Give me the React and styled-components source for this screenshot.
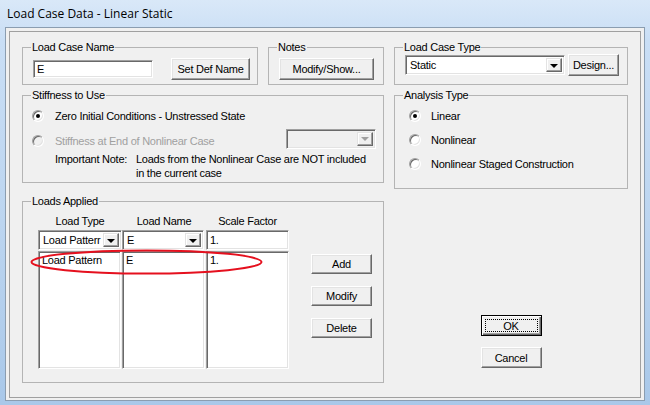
import styled, { createGlobalStyle } from 'styled-components';

const GlobalStyle = createGlobalStyle`
  html, body { margin: 0; padding: 0; }
  body {
    width: 650px;
    height: 405px;
    overflow: hidden;
    font-family: "Liberation Sans", Arial, sans-serif;
    font-size: 11px;
    letter-spacing: -0.25px;
    color: #000;
  }
`;

const Frame = styled.div`
  width: 650px;
  height: 405px;
  box-sizing: border-box;
  padding: 0 5px 4px 5px;
  display: flex;
  flex-direction: column;
  background: linear-gradient(180deg, #d9e8f8 0%, #c9def5 10%, #bcd5f0 55%, #a9c8e9 100%);
`;

const TitleBar = styled.div`
  height: 27px;
  display: flex;
  align-items: center;
  padding-left: 2px;
  font-family: "Open Sans", "Noto Sans", sans-serif;
  font-size: 12px;
  letter-spacing: 0;
  color: #000;
`;

const Client = styled.div`
  flex: 1;
  border: 1px solid #8b9db0;
  background: #f0f0f0;
  padding: 3px 3px 2px 3px;
  display: flex;
`;

const Panel = styled.div`
  flex: 1;
  border: 1px solid #a0a0a0;
  padding: 9px 11px 0 12px;
  display: flex;
  gap: 10px;
`;

const Column = styled.div`
  width: ${p => p.$w}px;
  display: flex;
  flex-direction: column;
  gap: ${p => p.$gap || 0}px;
`;

const Row = styled.div`
  display: flex;
  gap: ${p => p.$gap || 0}px;
  align-items: ${p => p.$align || 'stretch'};
  justify-content: ${p => p.$justify || 'flex-start'};
  width: ${p => p.$full ? '100%' : 'auto'};
  margin-top: ${p => p.$mt || 0}px;
`;

// group box: legend sits 8px in from the border whatever the content padding
const Group = styled.fieldset`
  margin: ${p => p.$mt || 0}px 0 0 0;
  min-width: 0;
  box-sizing: border-box;
  width: ${p => p.$w ? `${p.$w}px` : 'auto'};
  height: ${p => p.$h}px;
  border: 1px solid #b4b4b4;
  padding: ${p => p.$pt || 0}px 7px 0 ${p => p.$pl}px;
  display: flex;
  flex-direction: ${p => p.$dir || 'row'};
  align-items: ${p => p.$align || 'flex-start'};
  justify-content: ${p => p.$justify || 'flex-start'};
  gap: ${p => p.$gap || 0}px;
  & > legend {
    margin-left: ${p => 8 - p.$pl}px;
  }
`;

const Legend = styled.legend`
  padding: 0 1px;
  line-height: 13px;
  font-size: 11px;
`;

const Button = styled.button`
  box-sizing: border-box;
  width: ${p => p.$w}px;
  height: ${p => p.$h || 21}px;
  padding: 0;
  font-family: inherit;
  font-size: 11px;
  letter-spacing: -0.25px;
  color: #000;
  background: #f0f0f0;
  border: 1px solid;
  border-color: #fff #696969 #696969 #fff;
  box-shadow: inset -1px -1px #a0a0a0, inset 1px 1px #e3e3e3;
  flex-shrink: 0;
`;

const DefaultButton = styled(Button)`
  border: 1px solid #000;
  box-shadow: inset 1px 1px #fff, inset -1px -1px #696969, inset -2px -2px #a0a0a0;
  padding: 3px;
  span {
    display: block;
    height: 100%;
    border: 1px dotted #000;
    box-sizing: border-box;
    line-height: 12px;
  }
`;

const Sunken = styled.div`
  box-sizing: border-box;
  background: ${p => p.$disabled ? '#f0f0f0' : '#fff'};
  border: 1px solid;
  border-color: #a0a0a0 #fff #fff #a0a0a0;
  box-shadow: inset 1px 1px #696969, inset -1px -1px #e3e3e3;
`;

const TextBox = styled(Sunken)`
  width: ${p => p.$w}px;
  height: ${p => p.$h || 19}px;
  padding: 0 3px;
  display: flex;
  align-items: center;
  white-space: nowrap;
  overflow: hidden;
  flex-shrink: 0;
`;

const Combo = styled(Sunken)`
  width: ${p => p.$w}px;
  height: ${p => p.$h || 20}px;
  display: flex;
  align-items: stretch;
  padding: 2px;
  flex-shrink: 0;
`;

const ComboText = styled.div`
  flex: 1;
  padding-left: 2px;
  display: flex;
  align-items: center;
  white-space: nowrap;
  overflow: hidden;
`;

const ArrowBtn = styled.div`
  width: 16px;
  box-sizing: border-box;
  background: #f0f0f0;
  border: 1px solid;
  border-color: #e3e3e3 #696969 #696969 #e3e3e3;
  box-shadow: inset -1px -1px #a0a0a0, inset 1px 1px #fff;
  display: flex;
  align-items: center;
  justify-content: center;
  &::after {
    content: "";
    border-left: 4px solid transparent;
    border-right: 4px solid transparent;
    border-top: 4px solid ${p => p.$disabled ? '#a0a0a0' : '#000'};
    margin-top: 1px;
  }
`;

const RadioRow = styled.label`
  display: flex;
  align-items: center;
  height: 16px;
  gap: ${p => p.$gap || 11}px;
  margin-top: ${p => p.$mt || 0}px;
  color: ${p => p.$disabled ? '#a0a0a0' : '#000'};
  white-space: nowrap;
`;

const RadioDot = styled.span`
  width: 12px;
  height: 12px;
  box-sizing: border-box;
  border-radius: 50%;
  background: ${p => p.$disabled ? '#f0f0f0' : '#fff'};
  border: 1px solid;
  border-color: #a0a0a0 #fff #fff #a0a0a0;
  box-shadow: inset 1px 1px #696969, inset -1px -1px #e3e3e3;
  display: flex;
  align-items: center;
  justify-content: center;
  flex-shrink: 0;
  &::after {
    content: "";
    width: 4px;
    height: 4px;
    border-radius: 50%;
    background: ${p => p.$checked ? '#000' : 'transparent'};
  }
`;

const Note = styled.div`
  display: grid;
  grid-template-columns: 81px auto;
  line-height: 14px;
  margin: 3px 0 0 23px;
  white-space: nowrap;
`;

const Table = styled.div`
  position: relative;
  display: grid;
  grid-template-columns: 84px 84px 83px;
  grid-template-rows: 16px 20px 119px;
  margin-left: 8px;
`;

const Header = styled.div`
  text-align: center;
  line-height: 14px;
`;

const ListCol = styled(Sunken)`
  margin-top: 1px;
  margin-right: ${p => p.$mr || 0}px;
  padding: 2px 3px;
  line-height: 13px;
  white-space: nowrap;
`;

const Ellipse = styled.svg`
  position: absolute;
  left: -8px;
  top: 35px;
  pointer-events: none;
`;

const ButtonStack = styled.div`
  display: flex;
  flex-direction: column;
  align-items: center;
  gap: ${p => p.$gap}px;
  margin-top: ${p => p.$mt}px;
`;

export default function App() {
  return (
    <>
      <GlobalStyle />
      <Frame>
        <TitleBar>Load Case Data - Linear Static</TitleBar>
        <Client>
          <Panel>
            <Column $w={362} $gap={4}>
              <Row $gap={10}>
                <Group $w={236} $h={44} $pl={10} $align="center" $justify="space-between">
                  <Legend>Load Case Name</Legend>
                  <TextBox $w={120} $h={18}>E</TextBox>
                  <Button $w={79} $h={22}>Set Def Name</Button>
                </Group>
                <Group $w={116} $h={44} $pl={10} $align="center">
                  <Legend>Notes</Legend>
                  <Button $w={95} $h={22}>Modify/Show...</Button>
                </Group>
              </Row>
              <Group $h={94} $pl={9} $pt={6} $dir="column">
                <Legend>Stiffness to Use</Legend>
                <RadioRow><RadioDot $checked />Zero Initial Conditions - Unstressed State</RadioRow>
                <Row $full $align="center" $justify="space-between" $mt={4}>
                  <RadioRow $disabled $mt={5}><RadioDot $disabled />Stiffness at End of Nonlinear Case</RadioRow>
                  <Combo $w={90} $h={20} $disabled>
                    <ComboText />
                    <ArrowBtn $disabled />
                  </Combo>
                </Row>
                <Note>
                  <span>Important Note:</span>
                  <span>Loads from the Nonlinear Case are NOT included<br />in the current case</span>
                </Note>
              </Group>
              <Group $h={188} $pl={7} $pt={6} $gap={22} $mt={8}>
                <Legend>Loads Applied</Legend>
                <Table>
                  <Header>Load Type</Header>
                  <Header>Load Name</Header>
                  <Header>Scale Factor</Header>
                  <Combo $w={84} $h={20}>
                    <ComboText>Load Patterr</ComboText>
                    <ArrowBtn />
                  </Combo>
                  <Combo $w={82} $h={20}>
                    <ComboText>E</ComboText>
                    <ArrowBtn />
                  </Combo>
                  <TextBox $w={83} $h={20}>1.</TextBox>
                  <ListCol $mr={1}>Load Pattern</ListCol>
                  <ListCol $mr={1}>E</ListCol>
                  <ListCol>1.</ListCol>
                  <Ellipse width="233" height="26" viewBox="0 0 233 26">
                    <ellipse cx="116.5" cy="13" rx="115" ry="11.5" fill="none" stroke="#e5101e" strokeWidth="2" />
                  </Ellipse>
                </Table>
                <ButtonStack $gap={12} $mt={40}>
                  <Button $w={61} $h={20}>Add</Button>
                  <Button $w={61} $h={20}>Modify</Button>
                  <Button $w={61} $h={20}>Delete</Button>
                </ButtonStack>
              </Group>
            </Column>
            <Column $w={234} $gap={4}>
              <Group $h={44} $pl={10} $align="center" $gap={3}>
                <Legend>Load Case Type</Legend>
                <Combo $w={160} $h={20}>
                  <ComboText>Static</ComboText>
                  <ArrowBtn />
                </Combo>
                <Button $w={51} $h={22}>Design...</Button>
              </Group>
              <Group $h={100} $pl={14} $pt={6} $dir="column" $gap={8}>
                <Legend>Analysis Type</Legend>
                <RadioRow $gap={10}><RadioDot $checked />Linear</RadioRow>
                <RadioRow $gap={10}><RadioDot />Nonlinear</RadioRow>
                <RadioRow $gap={10}><RadioDot />Nonlinear Staged Construction</RadioRow>
              </Group>
              <ButtonStack $gap={11} $mt={122}>
                <DefaultButton $w={61} $h={21}><span>OK</span></DefaultButton>
                <Button $w={61} $h={21}>Cancel</Button>
              </ButtonStack>
            </Column>
          </Panel>
        </Client>
      </Frame>
    </>
  );
}
